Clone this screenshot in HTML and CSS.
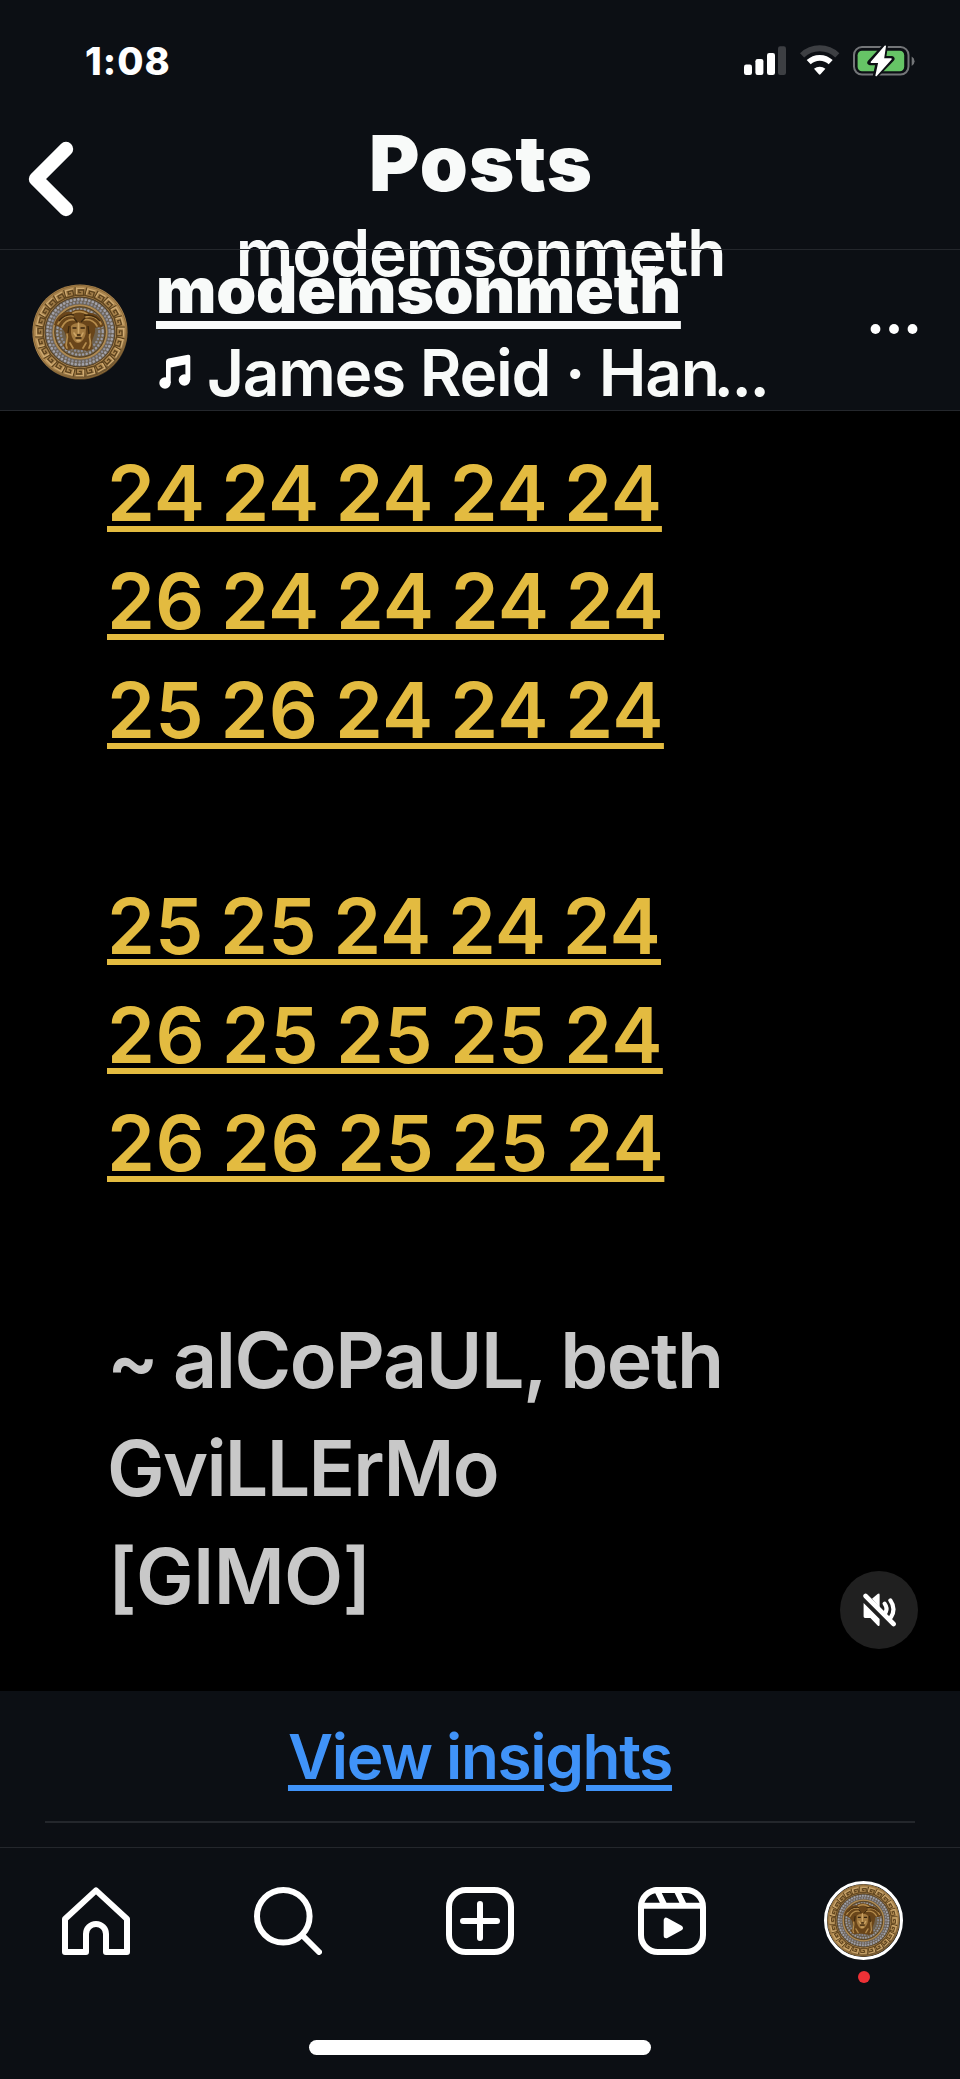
FILE: index.html
```
<!DOCTYPE html>
<html lang="en">
<head>
<meta charset="utf-8">
<title>Posts</title>
<link rel="stylesheet" href="styles.css">
</head>
<body>
<svg class="defs" aria-hidden="true">
  <defs>
    <radialGradient id="gold" cx="46%" cy="42%" r="58%">
      <stop offset="0" stop-color="#8b642d"/>
      <stop offset=".6" stop-color="#a07c48"/>
      <stop offset=".88" stop-color="#b48d54"/>
      <stop offset="1" stop-color="#5b4526"/>
    </radialGradient>
    <g id="key">
      <path d="M-4.8 -44.8V-36.6H3.6V-42H-1.2V-39.4H1.2" fill="none" stroke="#5d431e" stroke-width="1.3"/>
      <path d="M-3.6 -44.4V-38M-3 -43.6H4.4" fill="none" stroke="#cfab72" stroke-width="1.2"/>
    </g>
    <g id="keys">
      <use href="#key"/>
      <use href="#key" transform="rotate(15)"/>
      <use href="#key" transform="rotate(30)"/>
      <use href="#key" transform="rotate(45)"/>
      <use href="#key" transform="rotate(60)"/>
      <use href="#key" transform="rotate(75)"/>
    </g>
    <symbol id="medallion" viewBox="-48 -48 96 96">
      <circle r="47.6" fill="url(#gold)"/>
      <circle r="46.6" fill="none" stroke="#8d6a38" stroke-width="1"/>
      <use href="#keys"/>
      <use href="#keys" transform="rotate(90)"/>
      <use href="#keys" transform="rotate(180)"/>
      <use href="#keys" transform="rotate(270)"/>
      <circle r="35.4" fill="#4e3b22"/>
      <circle r="34.6" fill="#6d6459"/>
      <circle r="32.6" fill="none" stroke="#a3a3ab" stroke-width="2.7" stroke-linecap="round" stroke-dasharray="0 3.7"/>
      <circle r="29.6" fill="none" stroke="#8f8f9a" stroke-width="2.4" stroke-linecap="round" stroke-dasharray="0 3.6"/>
      <circle r="26.6" fill="#6e604b" stroke="#b08a50" stroke-width="1.8"/>
      <circle r="25.2" fill="none" stroke="#563e1c" stroke-width="1"/>
      <circle r="22.8" fill="none" stroke="#9b9ca6" stroke-width="2.5" stroke-linecap="round" stroke-dasharray="0 3.6"/>
      <circle r="19.2" fill="none" stroke="#898a94" stroke-width="2.5" stroke-linecap="round" stroke-dasharray="0 3.5"/>
      <path d="M-26 -7C-23 -17-16 -21-9 -20C-4 -24 5 -23 9 -19C16 -20 22 -14 24 -6C21 -4 17 -5 15 -4C16 2 12 6 12 11L13 17L7 19L-3 17L-14 18L-17 13C-12 10-14 5-15 1C-17 -4-21 -6-26 -7Z" fill="#69451a"/>
      <path d="M-22 -8C-18 -15-12 -17-7 -16M-18 -5C-15 -11-10 -13-5 -12M21 -8C18 -14 12 -17 6 -15M17 -6C14 -11 9 -13 4 -12M-7 -19C-3 -21 3 -21 7 -18M-13 2C-11 8-16 12-13 16M10 2C8 8 13 10 9 16M-10 11L-7 16M6 11L3 16" fill="none" stroke="#b58c4c" stroke-width="1.7" stroke-linecap="round"/>
      <path d="M-21 -11C-16 -17-11 -18-6 -17M20 -11C15 -17 9 -17 4 -17M-11 -6L-12 1M8 -6L9 2M-6 -14L-3 -10M5 -14L1 -10" fill="none" stroke="#3d280e" stroke-width="1.3"/>
      <path d="M-9 -6C-6 -10 3 -10 6 -6L5.6 2C4.5 7 1 11-2 11C-5 11-8.5 6-9 1Z" fill="#a47b40"/>
      <path d="M-1.5 -9V1M-6 1L-4 4M3 1L1.5 4M-3 8.6H0" fill="none" stroke="#cda566" stroke-width="1.6" stroke-linecap="round"/>
      <path d="M-7.5 -4H-3.5M.5 -4H4.8M-3 3H.5M-4.5 6H1.5" fill="none" stroke="#38240d" stroke-width="1.7"/>
    </symbol>
  </defs>
</svg>

<header class="top">
  <div class="status">
    <span class="time">1:08</span>
    <svg class="status-icons" viewBox="0 0 172 32">
      <g fill="#fff">
        <rect x="0" y="19.5" width="8" height="10.5" rx="2.2"/>
        <rect x="11.4" y="14" width="8" height="16" rx="2.2"/>
        <rect x="23" y="8" width="8" height="22" rx="2.2"/>
        <rect x="34" y="1.2" width="8" height="28.8" rx="2.2" fill="#3d3f43"/>
      </g>
      <g fill="none" transform="translate(75.7 0)">
        <path d="M-17.6 10.3A25.5 25.5 0 0 1 17.6 10.3" stroke="#3d3f43" stroke-width="6"/>
        <path d="M-11 17.2A16 16 0 0 1 11 17.2" stroke="#fff" stroke-width="5.8"/>
        <path d="M-5.7 23.8A8.6 8.6 0 0 1 5.7 23.8L.8 29.3Q0 30.2-.8 29.3Z" fill="#fff"/>
      </g>
      <rect x="110" y="2" width="54.5" height="27.6" rx="8" fill="none" stroke="#737578" stroke-width="2"/>
      <path d="M167.7 11.5a5.3 5.3 0 0 1 0 9.4Z" fill="#737578"/>
      <rect x="113.6" y="5.8" width="46.6" height="20.4" rx="4.4" fill="#66c466"/>
      <path d="M141.2 1L126 17.6h8.4L131.6 30.6L147.8 13.8h-8.5Z" fill="#0c0f14" stroke="#0c0f14" stroke-width="5.4" stroke-linejoin="round"/>
      <path d="M141.2 1.2L127.4 17.2h7.7L132.2 30.4L147 14h-7.7Z" fill="#fff" stroke="#fff" stroke-width="1.6" stroke-linejoin="round"/>
    </svg>
  </div>
  <div class="titlebar">
    <svg class="back" viewBox="0 0 46 76"><path d="M38 8L8 38L38 68" fill="none" stroke="#fff" stroke-width="14.4" stroke-linecap="round" stroke-linejoin="round"/></svg>
    <div class="titles">
      <h1 class="title">Posts</h1>
      <p class="subtitle">modemsonmeth</p>
    </div>
  </div>
</header>

<section class="author">
  <svg class="avatar"><use href="#medallion"/></svg>
  <div class="author-text">
    <a class="username">modemsonmeth</a>
    <div class="track">
      <svg class="note" viewBox="0 0 32 36"><g fill="#fff"><circle cx="6" cy="29" r="5.7"/><circle cx="25.4" cy="26" r="5.7"/><path d="M7 7.2Q7 4.8 9.4 4.4L29 .8Q31.3.4 31.3 2.8V26H26.4V10.6L11.7 13.4V29H7Z"/></g></svg>
      <span class="song">James Reid · Han<span class="ellipsis">...</span></span>
    </div>
  </div>
  <svg class="more" viewBox="0 0 48 12"><g fill="#fff"><circle cx="5.5" cy="6" r="4.9"/><circle cx="24" cy="6" r="4.9"/><circle cx="42.5" cy="6" r="4.9"/></g></svg>
</section>

<main class="media">
  <div class="lines numbers">
    <p><a class="n1">24 24 24 24 24</a></p>
    <p><a class="n2">26 24 24 24 24</a></p>
    <p><a class="n3">25 26 24 24 24</a></p>
  </div>
  <div class="lines numbers">
    <p><a class="n4">25 25 24 24 24</a></p>
    <p><a class="n5">26 25 25 25 24</a></p>
    <p><a class="n6">26 26 25 25 24</a></p>
  </div>
  <div class="lines signature">
    <p class="s1">~ alCoPaUL, beth</p>
    <p class="s2">GviLLErMo</p>
    <p class="s3">[GIMO]</p>
  </div>
  <div class="mute">
    <svg viewBox="0 0 33 34"><g fill="#fff"><path d="M9 5.8L14.6 1Q16.6 -.5 16.6 1.8V14.4Z"/><path d="M.6 10L16.6 26V31.4Q16.6 34 14.6 32.4L7.4 25H2Q.6 25 .6 23.6Z"/></g><g fill="none" stroke="#fff" stroke-width="4.6" stroke-linecap="round"><path d="M2.6 3L30.6 31"/><path d="M27.4 7.4C31.6 13.4 31.2 19 28 24.2" stroke-width="4.2"/><path d="M21.6 10.6C24 14 24 16.5 22.8 19" stroke-width="4.2"/></g></svg>
  </div>
</main>

<section class="insights"><a class="insights-link">View insights</a></section>

<nav class="tabs">
  <svg class="tab" viewBox="0 0 68 68"><path d="M3 32L34 3.4L65 32V65H44V47a10 10 0 0 0-20 0V65H3Z"/></svg>
  <svg class="tab" viewBox="0 0 68 68"><circle cx="29.3" cy="29.3" r="26.3"/><path d="M48.5 48.5L65 65"/></svg>
  <svg class="tab" viewBox="0 0 68 68"><rect x="3" y="3" width="62" height="62" rx="17"/><path d="M34 17V51M17 34H51"/></svg>
  <svg class="tab" viewBox="0 0 68 68"><rect x="3" y="3" width="62" height="62" rx="17"/><path d="M4 18.7H64M19 3L26.3 18M38.5 3L45.8 18"/><path d="M28.2 33.2V48.8L42.4 41Z" fill="#fff" stroke-width="5"/></svg>
  <div class="profile"><svg><use href="#medallion"/></svg><span class="dot"></span></div>
</nav>
<div class="home-indicator"></div>
</body>
</html>
```

FILE: styles.css
```
* { box-sizing: border-box; }

body {
  margin: 0;
  height: 2079px;
  overflow: hidden;
  background: #0c0f14;
  color: #f8faf9;
  font-family: Inter, "Liberation Sans", sans-serif;
}

h1, p { margin: 0; }
svg { display: block; flex: none; }
.defs { position: absolute; width: 0; height: 0; }

.top { height: 249px; }

.status {
  display: flex;
  align-items: center;
  justify-content: space-between;
  height: 118px;
  padding: 4px 44px 0 85px;
  color: #fff;
}
.time { font-size: 38px; font-weight: 800; letter-spacing: 1px; line-height: 46px; }
.status-icons { width: 172px; height: 32px; }

.titlebar {
  display: grid;
  grid-template-columns: 46px 1fr 46px;
  padding: 0 28px;
}
.back { width: 46px; height: 76px; margin-top: 23px; }
.titles { text-align: center; line-height: 90px; white-space: nowrap; }
.title { font-size: 77px; font-weight: 900; line-height: 90px; letter-spacing: 1.1px; padding-left: 2px; }
.subtitle { font-size: 64px; font-weight: 600; line-height: 90px; letter-spacing: -1.1px; padding-left: 1px; }

.author {
  position: relative;
  display: flex;
  align-items: center;
  height: 162px;
  padding: 4px 42px 0 32px;
  border-bottom: 1px solid #24272c;
}
.author::before {
  content: "";
  position: absolute;
  inset: 0 0 auto;
  height: 1px;
  background: #24272c;
}
.avatar { width: 96px; height: 96px; }
.author-text { flex: 1; margin: -2px 0 0 28px; white-space: nowrap; }
.username {
  display: block;
  width: 525px;
  font-size: 64px;
  font-weight: 900;
  line-height: 83px;
  letter-spacing: -.15px;
  text-decoration: underline 8px;
  text-underline-offset: 8px;
  text-decoration-skip-ink: none;
}
.track { display: flex; align-items: center; padding-left: 3px; }
.note { width: 32px; height: 36px; margin-right: 16px; }
.song { font-size: 64px; font-weight: 600; line-height: 83px; letter-spacing: -1.3px; }
.ellipsis { margin-left: -5px; letter-spacing: -2.4px; }
.more { width: 48px; height: 12px; margin-top: -6px; }

.media {
  position: relative;
  display: flex;
  flex-direction: column;
  gap: 108.33px;
  height: 1280px;
  padding: 28px 107px 0;
  background: #000;
}
.lines { font-size: 77px; font-weight: 600; line-height: 108.33px; white-space: nowrap; }
.numbers { color: #e3bb40; word-spacing: -3px; }
.numbers a {
  text-decoration: underline 6px;
  text-underline-offset: 5px;
  text-decoration-skip-ink: none;
}
.n1 { letter-spacing: -.07px; }
.n2 { letter-spacing: .14px; }
.n3 { letter-spacing: .25px; }
.n4 { letter-spacing: .1px; }
.n5 { letter-spacing: .41px; }
.n6 { letter-spacing: .46px; }
.signature { color: #c8c8c8; }
.s1 { letter-spacing: -1.4px; word-spacing: -2.5px; }
.s2 { letter-spacing: -1.73px; }
.s3 { letter-spacing: -.68px; padding-left: 1px; }

.mute {
  position: absolute;
  right: 42px;
  bottom: 42px;
  display: grid;
  place-items: center;
  width: 78px;
  height: 78px;
  border-radius: 50%;
  background: #202020;
}
.mute svg { width: 33px; height: 34px; }

.insights {
  height: 132px;
  margin: 0 45px;
  padding-top: 24px;
  border-bottom: 2px solid #24272c;
  text-align: center;
}
.insights-link {
  color: #4093f8;
  font-size: 62px;
  font-weight: 600;
  line-height: 83px;
  letter-spacing: -1.33px;
  text-decoration: underline 6px;
  text-underline-offset: 6px;
}

.tabs {
  display: grid;
  grid-template-columns: repeat(5, 1fr);
  justify-items: center;
  align-items: start;
  height: 193px;
  margin-top: 24px;
  padding-top: 39px;
  border-top: 1px solid #24272c;
}
.tab {
  width: 68px;
  height: 68px;
  fill: none;
  stroke: #fff;
  stroke-width: 6;
  stroke-linecap: round;
  stroke-linejoin: round;
}
.profile {
  display: flex;
  flex-direction: column;
  align-items: center;
  gap: 11px;
  margin-top: -6px;
}
.profile svg {
  width: 79px;
  height: 79px;
  margin-right: 1px;
  border: 3px solid #fff;
  border-radius: 50%;
}
.dot { width: 12px; height: 12px; border-radius: 50%; background: #ee3136; }

.home-indicator {
  width: 342px;
  height: 15px;
  margin: 0 auto;
  border-radius: 8px;
  background: #fff;
}
```
